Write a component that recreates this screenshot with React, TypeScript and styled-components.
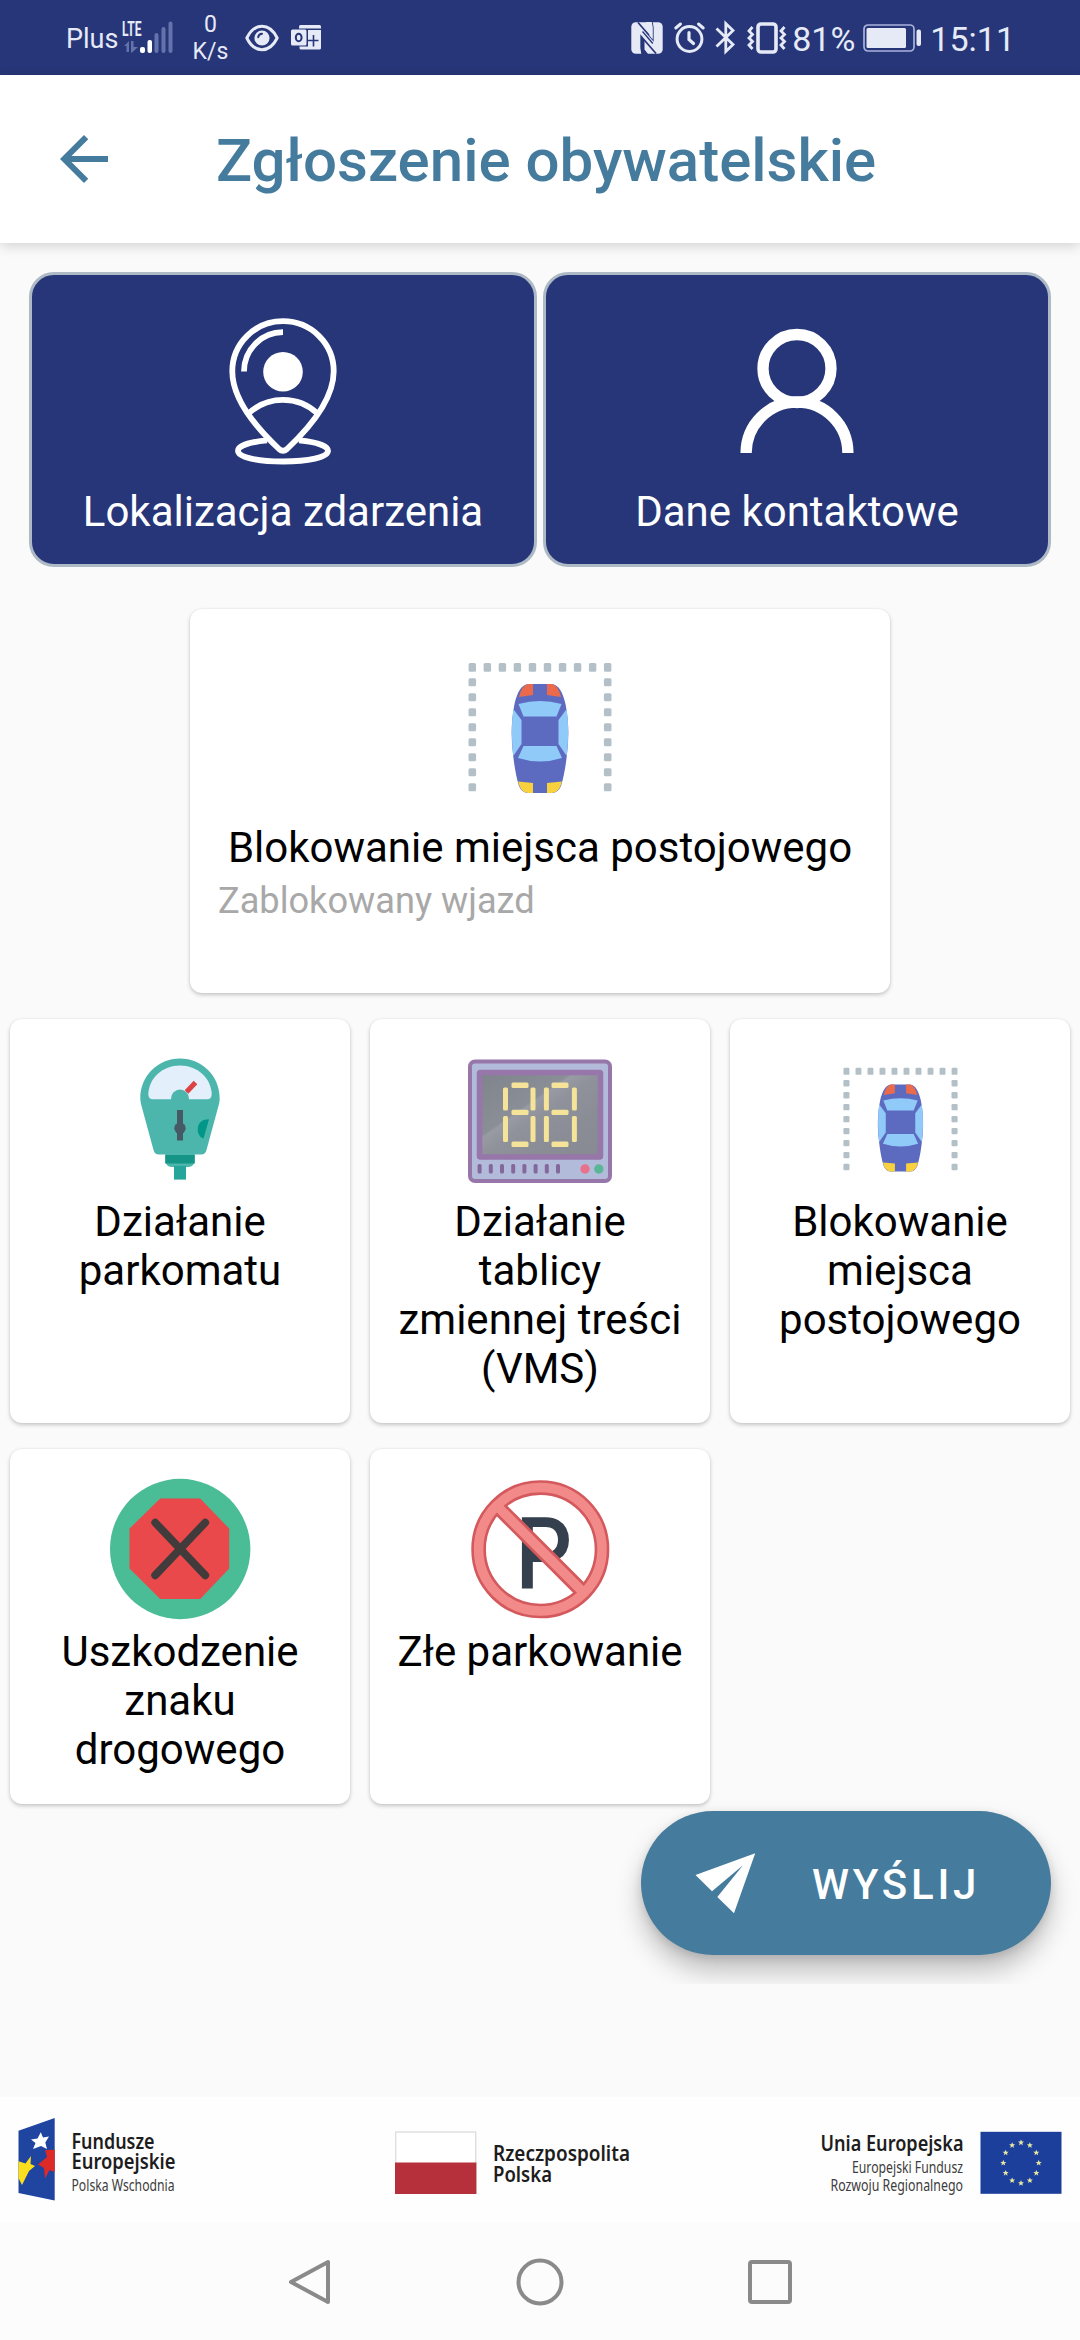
import React from "react";
import styled, { createGlobalStyle } from "styled-components";

const navy = "#263678";
const steel = "#457b9d";
const statusInk = "#e6eaf6";

const GlobalStyle = createGlobalStyle`
  * { box-sizing: border-box; }
  html, body { margin: 0; padding: 0; background: #fafafa; }
  body { font-family: Roboto, "Noto Sans", sans-serif; }
  button { font: inherit; border: 0; padding: 0; background: none; color: inherit; }
  svg { display: block; flex: none; overflow: visible; }
`;

const Screen = styled.div`
  width: 1080px;
  height: 2340px;
  display: flex;
  flex-direction: column;
  background: #fafafa;
  overflow: hidden;
`;

/* ---------- status bar ---------- */

const StatusBar = styled.div`
  height: 75px;
  flex: none;
  display: flex;
  justify-content: space-between;
  align-items: center;
  padding: 0 65px 0 66px;
  background: ${navy};
  color: ${statusInk};
`;

const StatusGroup = styled.div`
  display: flex;
  align-items: center;
`;

const Carrier = styled.span`
  font-size: 27px;
  line-height: 32px;
  margin: 3px 3px 0 0;
`;

const Speed = styled.div`
  width: 40px;
  margin-left: 13px;
  text-align: center;
  font-size: 23px;
  line-height: 27px;
`;

const StatusText = styled.span<{ $left: number }>`
  margin-left: ${(p) => p.$left}px;
  font-size: 34px;
  line-height: 40px;
  padding-top: 2px;
`;

const StatusIcon = styled.svg<{ $left: number }>`
  margin-left: ${(p) => p.$left}px;
`;

/* ---------- app bar ---------- */

const AppBar = styled.header`
  height: 168px;
  flex: none;
  display: flex;
  align-items: center;
  padding: 0 48px;
  background: #fff;
  box-shadow: 0 3px 12px rgba(0, 0, 0, 0.16);
  z-index: 1;
`;

const Title = styled.h1`
  margin: 4px 0 0 96px;
  font-size: 60px;
  line-height: 70px;
  font-weight: 500;
  color: ${steel};
  white-space: nowrap;
`;

/* ---------- content ---------- */

const Content = styled.main`
  height: 1741px;
  flex: none;
  display: flex;
  flex-direction: column;
  padding-top: 29px;
  overflow: hidden;
`;

const TileRow = styled.div`
  display: grid;
  grid-template-columns: 1fr 1fr;
  gap: 6px;
  padding: 0 29px;
`;

const Tile = styled.button`
  height: 295px;
  display: flex;
  flex-direction: column;
  align-items: center;
  justify-content: flex-start;
  padding-top: 41px;
  border: 3px solid #adb9c4;
  border-radius: 25px;
  background: ${navy};
  color: #fff;
`;

const TileIcon = styled.span`
  height: 150px;
  display: flex;
  align-items: center;
  margin-bottom: 21px;
`;

const Label = styled.span`
  font-size: 42px;
  line-height: 49px;
  text-align: center;
`;

const Card = styled.article`
  display: flex;
  flex-direction: column;
  align-items: center;
  border-radius: 12px;
  background: #fff;
  color: #000;
  box-shadow: 0 2px 4px rgba(0, 0, 0, 0.2), 0 0 2px rgba(0, 0, 0, 0.08);
`;

const SelectedCard = styled(Card)`
  width: 700px;
  height: 384px;
  align-self: center;
  margin-top: 42px;
  padding: 46px 28px 0;
`;

const Subtitle = styled.span`
  align-self: flex-start;
  margin-top: 8px;
  font-size: 36.2px;
  line-height: 42px;
  color: #a8a8a8;
`;

const CategoryGrid = styled.section`
  display: grid;
  grid-template-columns: repeat(3, 340px);
  gap: 26px 20px;
  padding: 0 10px;
  margin-top: 26px;
`;

const CategoryCard = styled(Card)`
  padding: 28px 24px 30px;
`;

const Picture = styled.div<{ $gap: number }>`
  width: 144px;
  height: 144px;
  display: flex;
  align-items: center;
  justify-content: center;
  margin-bottom: ${(p) => p.$gap}px;
`;

const SendButton = styled.button`
  width: 410px;
  height: 144px;
  flex: none;
  align-self: flex-end;
  display: flex;
  align-items: center;
  margin: 7px 29px 0 0;
  padding-left: 54px;
  border-radius: 72px;
  background: ${steel};
  color: #fff;
  box-shadow: 0 16px 26px rgba(0, 0, 0, 0.24), 0 3px 10px rgba(0, 0, 0, 0.12);
`;

const SendLabel = styled.span`
  margin: 3px 0 0 56px;
  font-size: 42px;
  line-height: 49px;
  font-weight: 500;
  letter-spacing: 3.75px;
`;

/* ---------- footer ---------- */

const Sponsors = styled.footer`
  height: 126px;
  flex: none;
  margin-top: 113px;
  display: grid;
  grid-template-columns: 377px 425px 242px;
  align-items: center;
  padding: 0 18px;
  background: #fefefe;
`;

const FlagLogo = styled.svg`
  margin-top: 5px;
`;

const LogoText = styled.text<{ $strong?: boolean }>`
  font-family: "Noto Sans", "Open Sans", sans-serif;
  font-weight: ${(p) => (p.$strong ? 600 : 400)};
  font-size: ${(p) => (p.$strong ? 20.8 : 15.8)}px;
  fill: ${(p) => (p.$strong ? "#1d1d1d" : "#3c3c3c")};
`;

const NavBar = styled.nav`
  flex: 1;
  display: flex;
  justify-content: center;
  align-items: center;
  gap: 182px;
  background: #fcfcfc;
`;

/* ---------- drawings ---------- */

const SignalIcon = () => (
  <svg width="56" height="34" viewBox="0 0 56 34">
    <text x="1" y="15" fill={statusInk} fontFamily="Roboto" fontWeight="700" fontSize="19.5" textLength="19.5" lengthAdjust="spacingAndGlyphs">LTE</text>
    <g fill="#6473ab">
      <path d="M3 25L8 20V31H5.500V25Z" />
      <path d="M10 20H12.500V26H17L11 31.500H10Z" />
      <rect x="33.500" y="12" width="4" height="20" rx="2" />
      <rect x="40.500" y="6" width="4" height="26" rx="2" />
      <rect x="47.500" y="0.500" width="4" height="31.500" rx="2" />
    </g>
    <g fill="#fff">
      <rect x="19" y="26" width="5" height="6" rx="2" />
      <rect x="26.500" y="19" width="4.500" height="13" rx="2" />
    </g>
  </svg>
);

const EyeIcon = () => (
  <StatusIcon $left={15} width="34" height="28" viewBox="0 0 34 28">
    <path d="M1.800 14C5.500 6.500 10.500 2.300 17 2.300S28.500 6.500 32.200 14C28.500 21.500 23.500 25.700 17 25.700S5.500 21.500 1.800 14Z" fill="none" stroke={statusInk} strokeWidth="3" strokeLinejoin="round" />
    <circle cx="17" cy="14" r="7.600" fill={statusInk} />
    <path d="M13.200 13.200A4 4 0 0 1 17 9.800" fill="none" stroke={navy} strokeWidth="2" strokeLinecap="round" />
  </StatusIcon>
);

const OutlookIcon = () => (
  <StatusIcon $left={12} width="31" height="25" viewBox="0 0 31 25">
    <path d="M8 1.500Q8 0 9.500 0H28.500Q30 0 30 1.500V3.500H8Z" fill={statusInk} />
    <path d="M17 5H30V23Q30 24.500 28.500 24.500H10Q8.500 24.500 8.500 23V21.500H17Z" fill={statusInk} />
    <path d="M17 15.500H27.500M22.500 10V21.500" stroke={navy} strokeWidth="1.600" />
    <rect x="0" y="4.500" width="15.500" height="16" rx="1.500" fill={statusInk} />
    <ellipse cx="7.700" cy="12.500" rx="2.900" ry="3.700" fill="none" stroke={navy} strokeWidth="2" />
  </StatusIcon>
);

const NfcIcon = () => (
  <svg width="32" height="32" viewBox="0 0 32 32">
    <rect x="0.300" y="0.300" width="31.400" height="31.400" rx="4.500" fill={statusInk} />
    <path d="M7 0.500L21.800 17.500V5.500L20.800 0" fill="none" stroke={navy} strokeWidth="1.700" />
    <path d="M25 31.500L10.200 14.500V26L11.200 32" fill="none" stroke={navy} strokeWidth="1.700" />
    <path d="M10.200 14.500L13.500 18.300V27.500L17 32H11.200L10.200 26Z" fill={navy} />
    <path d="M21.800 17.500L18.500 13.700V7L15 0H20.800L21.800 5.500Z" fill={statusInk} />
    <path d="M8 1.500L22 18V22L8 5Z" fill={navy} opacity="0.001" />
    <path d="M11.500 9.500L21.800 21.500" stroke={navy} strokeWidth="1.300" />
  </svg>
);

const AlarmIcon = () => (
  <StatusIcon $left={11} width="31" height="32" viewBox="0 0 31 32" fill="none" stroke={statusInk} strokeLinecap="round">
    <circle cx="15.500" cy="17" r="12.400" strokeWidth="3" />
    <path d="M15 10.500V17.500L19.500 21.500" strokeWidth="3.200" />
    <path d="M1.800 6L6.500 2M29.200 6L24.500 2" strokeWidth="3" />
  </StatusIcon>
);

const BluetoothIcon = () => (
  <StatusIcon $left={10} width="21" height="33" viewBox="0 0 21 33">
    <path d="M1.500 7.500L18 23.500L10.800 30.500V2.500L18 9.500L1.500 25.500" fill="none" stroke={statusInk} strokeWidth="2.800" strokeLinejoin="miter" />
  </StatusIcon>
);

const VibrateIcon = () => (
  <StatusIcon $left={11} width="40" height="32" viewBox="0 0 40 32" fill="none" stroke={statusInk}>
    <rect x="11" y="2" width="18" height="28" rx="3" strokeWidth="3.600" />
    <path d="M5.500 5L2 9L5.500 12.500L2 16L5.500 19.500L2 23L5.500 27" strokeWidth="2.800" />
    <path d="M37.500 5L34 9L37.500 12.500L34 16L37.500 19.500L34 23L37.500 27" strokeWidth="2.800" />
  </StatusIcon>
);

const BatteryIcon = () => (
  <StatusIcon $left={8} width="59" height="28" viewBox="0 0 59 28">
    <rect x="1" y="1" width="50" height="26" rx="4" fill="none" stroke="#a9b3dc" strokeWidth="1.700" />
    <rect x="3.500" y="4" width="39.500" height="20" rx="1.500" fill={statusInk} />
    <rect x="53.500" y="5.500" width="4.500" height="16.500" rx="2" fill={statusInk} />
  </StatusIcon>
);

const BackIcon = () => (
  <svg width="72" height="72" viewBox="0 0 24 24" fill={steel}>
    <path d="M20 11H7.830l5.590-5.590L12 4l-8 8 8 8 1.410-1.410L7.830 13H20v-2z" />
  </svg>
);

const PinIcon = () => (
  <svg width="108" height="147" viewBox="0 0 108 147" fill="none" stroke="#fff" strokeWidth="5.800">
    <path d="M54 3.200C26 3.200 3.300 25.500 3.300 53.200C3.300 84 34 116 50 131Q54 134.500 58 131C74 116 104.700 84 104.700 53.200C104.700 25.500 82 3.200 54 3.200Z" />
    <path d="M15 53.500A39 39.300 0 0 1 54 14.200" />
    <circle cx="54" cy="53.800" r="19.800" fill="#fff" stroke="none" />
    <path d="M19.500 95.500Q34 81.800 54 81.800T88.500 95.500" />
    <path d="M38 122.400C20 124 9 128 9 132.800C9 139.500 29 143.500 54 143.500S99 139.500 99 132.800C99 128 88 124 70 122.400" />
  </svg>
);

const PersonIcon = () => (
  <svg width="114" height="124" viewBox="0 0 114 124" fill="none" stroke="#fff" strokeWidth="11.300">
    <circle cx="57" cy="39.500" r="34" />
    <path d="M6.100 124A50.900 51 0 0 1 107.900 124" />
  </svg>
);

const dotColumns = Array.from({ length: 10 }, (_, i) => 4.3 + i * 15.04);
const dotRows = Array.from({ length: 8 }, (_, i) => 20.3 + i * 15);

const CarIcon = ({ size }: { size: number }) => (
  <svg width={size} height={(size * 131) / 144} viewBox="0 0 144 131">
    <g fill="#b4c0c7">
      {dotColumns.map((x) => (
        <rect key={x} x={x - 3.7} y="1" width="7.400" height="8.800" rx="1.500" />
      ))}
      {dotRows.map((y) => (
        <React.Fragment key={y}>
          <rect x="0.500" y={y - 4} width="7.600" height="8" rx="1.500" />
          <rect x="135.900" y={y - 4} width="7.600" height="8" rx="1.500" />
        </React.Fragment>
      ))}
    </g>
    <path d="M60 22H84C91 23 95 31 97.500 42C101 60 101 76 99 92C97.500 106 95.500 116 93 124Q90 131 84 131H60Q54 131 51 124C48.500 116 46.500 106 45 92C43 76 43 60 46.500 42C49 31 53 23 60 22Z" fill="#5c6bc0" />
    <path d="M65 22V33L51 35Q54 23 60 22ZM79 22V33L93 35Q90 23 84 22Z" fill="#ec6a4c" />
    <path d="M65 131V121L50 119.500Q53 131 60 131ZM79 131V121L94 119.500Q91 131 84 131Z" fill="#f9d13f" />
    <g fill="#90caf9">
      <path d="M50.500 42Q72 36 93.500 42L88.500 54.500H55.500Z" />
      <path d="M55.500 84H88.500L94 96Q72 103 50 96Z" />
      <path d="M45.300 47L53.500 58V82L45.300 94Q42.300 70 45.300 47Z" />
      <path d="M98.700 47L90.500 58V82L98.700 94Q101.700 70 98.700 47Z" />
    </g>
  </svg>
);

const MeterIcon = () => (
  <svg width="144" height="144" viewBox="0 0 144 144">
    <path d="M57.300 106H86.700V115Q85 120 80 120H64Q59 120 57.300 115Z" fill="#4db6ac" />
    <rect x="57.300" y="108" width="29.400" height="8.500" fill="#159586" />
    <rect x="66" y="119" width="12" height="13.600" fill="#26a69a" />
    <path d="M72 11.500C50 11.500 32.300 29 32.300 51Q32.300 54 33 57L45.500 103Q46.700 107.600 51 107.600H93Q97.300 107.600 98.500 103L111 57Q111.700 54 111.700 51C111.700 29 94 11.500 72 11.500Z" fill="#4db6ac" />
    <path d="M72 18.500C54.500 18.500 41 31 40.300 47Q40.300 52.300 45 52.300H99Q103.700 52.300 103.700 47C103 31 89.500 18.500 72 18.500Z" fill="#e3effb" />
    <circle cx="72" cy="51.500" r="9" fill="#4db6ac" />
    <path d="M78.500 45L87.500 35.500" stroke="#dc4444" strokeWidth="5" />
    <rect x="69" y="63" width="6" height="30.500" fill="#455a64" />
    <circle cx="72" cy="81.300" r="5.700" fill="#455a64" />
    <path d="M101 72.300C93 72.300 89.700 77 89.700 82.500C89.700 87 92 90.500 95.500 91.500Z" fill="#009688" />
  </svg>
);

const digitLeft = [37.5, 65, 78.4, 106.4];
const digitMiddle = [43.5, 83.5];

const BoardIcon = () => (
  <svg width="144" height="144" viewBox="0 0 144 144">
    <defs>
      <linearGradient id="board-glass" x1="0" y1="0" x2="1" y2="1">
        <stop offset="0" stopColor="#7f848c" />
        <stop offset="0.380" stopColor="#8a8e97" />
        <stop offset="0.400" stopColor="#989ba4" />
        <stop offset="0.500" stopColor="#8f929b" />
        <stop offset="0.720" stopColor="#8a8d96" />
        <stop offset="1" stopColor="#878a93" />
      </linearGradient>
    </defs>
    <rect x="2" y="14.500" width="140" height="119.500" rx="5" fill="#b3bbdb" stroke="#9776aa" strokeWidth="4" />
    <rect x="11.500" y="25.500" width="121" height="84.500" rx="1" fill="url(#board-glass)" stroke="#9776aa" strokeWidth="5.500" />
    <g fill="#f4e398">
      {digitLeft.map((x) => (
        <React.Fragment key={x}>
          <rect x={x - 2.5} y="40.500" width="5" height="23" rx="1.500" />
          <rect x={x - 2.5} y="69" width="5" height="26" rx="1.500" />
        </React.Fragment>
      ))}
      {digitMiddle.map((x) => (
        <React.Fragment key={x}>
          <rect x={x} y="35.500" width="17" height="5.500" rx="1.500" />
          <rect x={x} y="62.700" width="17" height="5.300" rx="1.500" />
          <rect x={x} y="94.500" width="17" height="5.500" rx="1.500" />
        </React.Fragment>
      ))}
    </g>
    <g fill="#84689c">
      {Array.from({ length: 8 }, (_, i) => (
        <rect key={i} x={9.6 + i * 11.2} y="117" width="4" height="9.500" rx="1.500" />
      ))}
    </g>
    <circle cx="117" cy="122" r="4.700" fill="#e8718c" />
    <circle cx="130.800" cy="122" r="4.700" fill="#59b697" />
  </svg>
);

const StopIcon = () => (
  <svg width="144" height="144" viewBox="0 0 144 144">
    <circle cx="72.200" cy="72" r="70.200" fill="#4bbd96" />
    <path d="M52.200 21.600H92.200L121.200 51.600V91.600L92.200 122H52.200L21.500 91.600V51.600Z" fill="#e9494b" />
    <path d="M47.200 45.600L97.200 98.300M97.200 45.600L47.200 98.300" stroke="#413b3c" strokeWidth="7.800" strokeLinecap="round" />
  </svg>
);

const NoParkingIcon = () => (
  <svg width="144" height="144" viewBox="0 0 144 144" fill="none">
    <text transform="translate(47.500 112) scale(0.880 1)" fill="#35404e" fontFamily="Roboto" fontWeight="500" fontSize="101">P</text>
    <g stroke="#d4595d">
      <circle cx="72.300" cy="72.300" r="61.700" strokeWidth="14.700" />
      <path d="M29 29L115.600 115.600" strokeWidth="15" />
    </g>
    <g stroke="#f38a8a">
      <circle cx="72.300" cy="72.300" r="61.700" strokeWidth="9.500" />
      <path d="M29 29L115.600 115.600" strokeWidth="9.500" />
    </g>
  </svg>
);

const PlaneIcon = () => (
  <svg width="61" height="61" viewBox="0 0 61 61" fill="#fff">
    <path d="M60.200 0.300L0.500 22L17 38.300L48 12.300L22.300 44L39 60.200Z" />
  </svg>
);

const FundsLogo = () => (
  <svg width="160" height="84" viewBox="0 0 160 84">
    <path d="M0.500 12.700L36.700 0V82.400L0.500 75Z" fill="#1f45a0" />
    <path d="M22.800 14.300L25 19.500L31 18.500L27.300 24.500L29 31L23 28L15 31L17.500 25L13 21.500L19.500 20.500Z" fill="#fff" />
    <path d="M0.500 43.300L7.500 45.500L13 38L12.500 46L17 48L11 53L4 67L0.500 60Z" fill="#fcdf1c" />
    <path d="M36.700 31.700L27 32L29 39L20 46.500L26 50L27 60.500L31.500 52L36.700 54Z" fill="#dd2a26" />
    <LogoText $strong x="53.500" y="30.500" textLength="83" lengthAdjust="spacingAndGlyphs">Fundusze</LogoText>
    <LogoText $strong x="53.500" y="51" textLength="104" lengthAdjust="spacingAndGlyphs">Europejskie</LogoText>
    <LogoText x="53.500" y="72.500" textLength="103" lengthAdjust="spacingAndGlyphs">Polska Wschodnia</LogoText>
  </svg>
);

const PolandLogo = () => (
  <FlagLogo width="236" height="64" viewBox="0 0 236 64">
    <rect x="0.700" y="1" width="80" height="61" fill="#fff" stroke="#dfdfdf" strokeWidth="1.400" />
    <rect x="0" y="31.500" width="81.400" height="31.500" fill="#b5303a" />
    <LogoText $strong x="98" y="29.500" textLength="137" lengthAdjust="spacingAndGlyphs">Rzeczpospolita</LogoText>
    <LogoText $strong x="98" y="50.500" textLength="59" lengthAdjust="spacingAndGlyphs">Polska</LogoText>
  </FlagLogo>
);

const starPath = "M0 -3L0.900 -0.900L3 -0.900L1.300 0.600L1.900 2.700L0 1.400L-1.900 2.700L-1.300 0.600L-3 -0.900L-0.900 -0.900Z";

const UnionLogo = () => (
  <FlagLogo width="242" height="64" viewBox="0 0 242 64">
    <LogoText $strong x="0.500" y="19.800" textLength="143" lengthAdjust="spacingAndGlyphs">Unia Europejska</LogoText>
    <LogoText x="32" y="41.500" textLength="111" lengthAdjust="spacingAndGlyphs">Europejski Fundusz</LogoText>
    <LogoText x="10.500" y="59.800" textLength="132.500" lengthAdjust="spacingAndGlyphs">Rozwoju Regionalnego</LogoText>
    <rect x="160.500" y="0.800" width="81" height="62" fill="#1d3f9c" />
    <g fill="#e6e8a2">
      {Array.from({ length: 12 }, (_, i) => {
        const angle = (i * Math.PI) / 6;
        return (
          <path
            key={i}
            d={starPath}
            transform={`translate(${201 + 17.7 * Math.sin(angle)} ${31.8 - 20.3 * Math.cos(angle)})`}
          />
        );
      })}
    </g>
  </FlagLogo>
);

const navIcon = { width: 48, height: 48, viewBox: "0 0 48 48", fill: "none", stroke: "#8a8a8a", strokeWidth: 4 };

/* ---------- data ---------- */

const categories = [
  { label: "Działanie parkomatu", icon: <MeterIcon /> },
  { label: "Działanie tablicy zmiennej treści (VMS)", icon: <BoardIcon /> },
  { label: "Blokowanie miejsca postojowego", icon: <CarIcon size={115} /> },
  { label: "Uszkodzenie znaku drogowego", icon: <StopIcon /> },
  { label: "Złe parkowanie", icon: <NoParkingIcon /> },
];

export default function App() {
  return (
    <Screen>
      <GlobalStyle />
      <StatusBar>
        <StatusGroup>
          <Carrier>Plus</Carrier>
          <SignalIcon />
          <Speed>
            0<br />K/s
          </Speed>
          <EyeIcon />
          <OutlookIcon />
        </StatusGroup>
        <StatusGroup>
          <NfcIcon />
          <AlarmIcon />
          <BluetoothIcon />
          <VibrateIcon />
          <StatusText $left={5}>81%</StatusText>
          <BatteryIcon />
          <StatusText $left={8}>15:11</StatusText>
        </StatusGroup>
      </StatusBar>

      <AppBar>
        <BackIcon />
        <Title>Zgłoszenie obywatelskie</Title>
      </AppBar>

      <Content>
        <TileRow>
          <Tile>
            <TileIcon><PinIcon /></TileIcon>
            <Label>Lokalizacja zdarzenia</Label>
          </Tile>
          <Tile>
            <TileIcon><PersonIcon /></TileIcon>
            <Label>Dane kontaktowe</Label>
          </Tile>
        </TileRow>

        <SelectedCard>
          <Picture $gap={24}><CarIcon size={144} /></Picture>
          <Label>Blokowanie miejsca postojowego</Label>
          <Subtitle>Zablokowany wjazd</Subtitle>
        </SelectedCard>

        <CategoryGrid>
          {categories.map((c) => (
            <CategoryCard key={c.label}>
              <Picture $gap={6}>{c.icon}</Picture>
              <Label>{c.label}</Label>
            </CategoryCard>
          ))}
        </CategoryGrid>

        <SendButton>
          <PlaneIcon />
          <SendLabel>WYŚLIJ</SendLabel>
        </SendButton>
      </Content>

      <Sponsors>
        <FundsLogo />
        <PolandLogo />
        <UnionLogo />
      </Sponsors>

      <NavBar>
        <svg {...navIcon}><path d="M42 4V44L5 24Z" strokeLinejoin="round" /></svg>
        <svg {...navIcon}><circle cx="24" cy="24" r="21.500" /></svg>
        <svg {...navIcon}><rect x="4" y="4" width="40" height="40" rx="2" /></svg>
      </NavBar>
    </Screen>
  );
}
